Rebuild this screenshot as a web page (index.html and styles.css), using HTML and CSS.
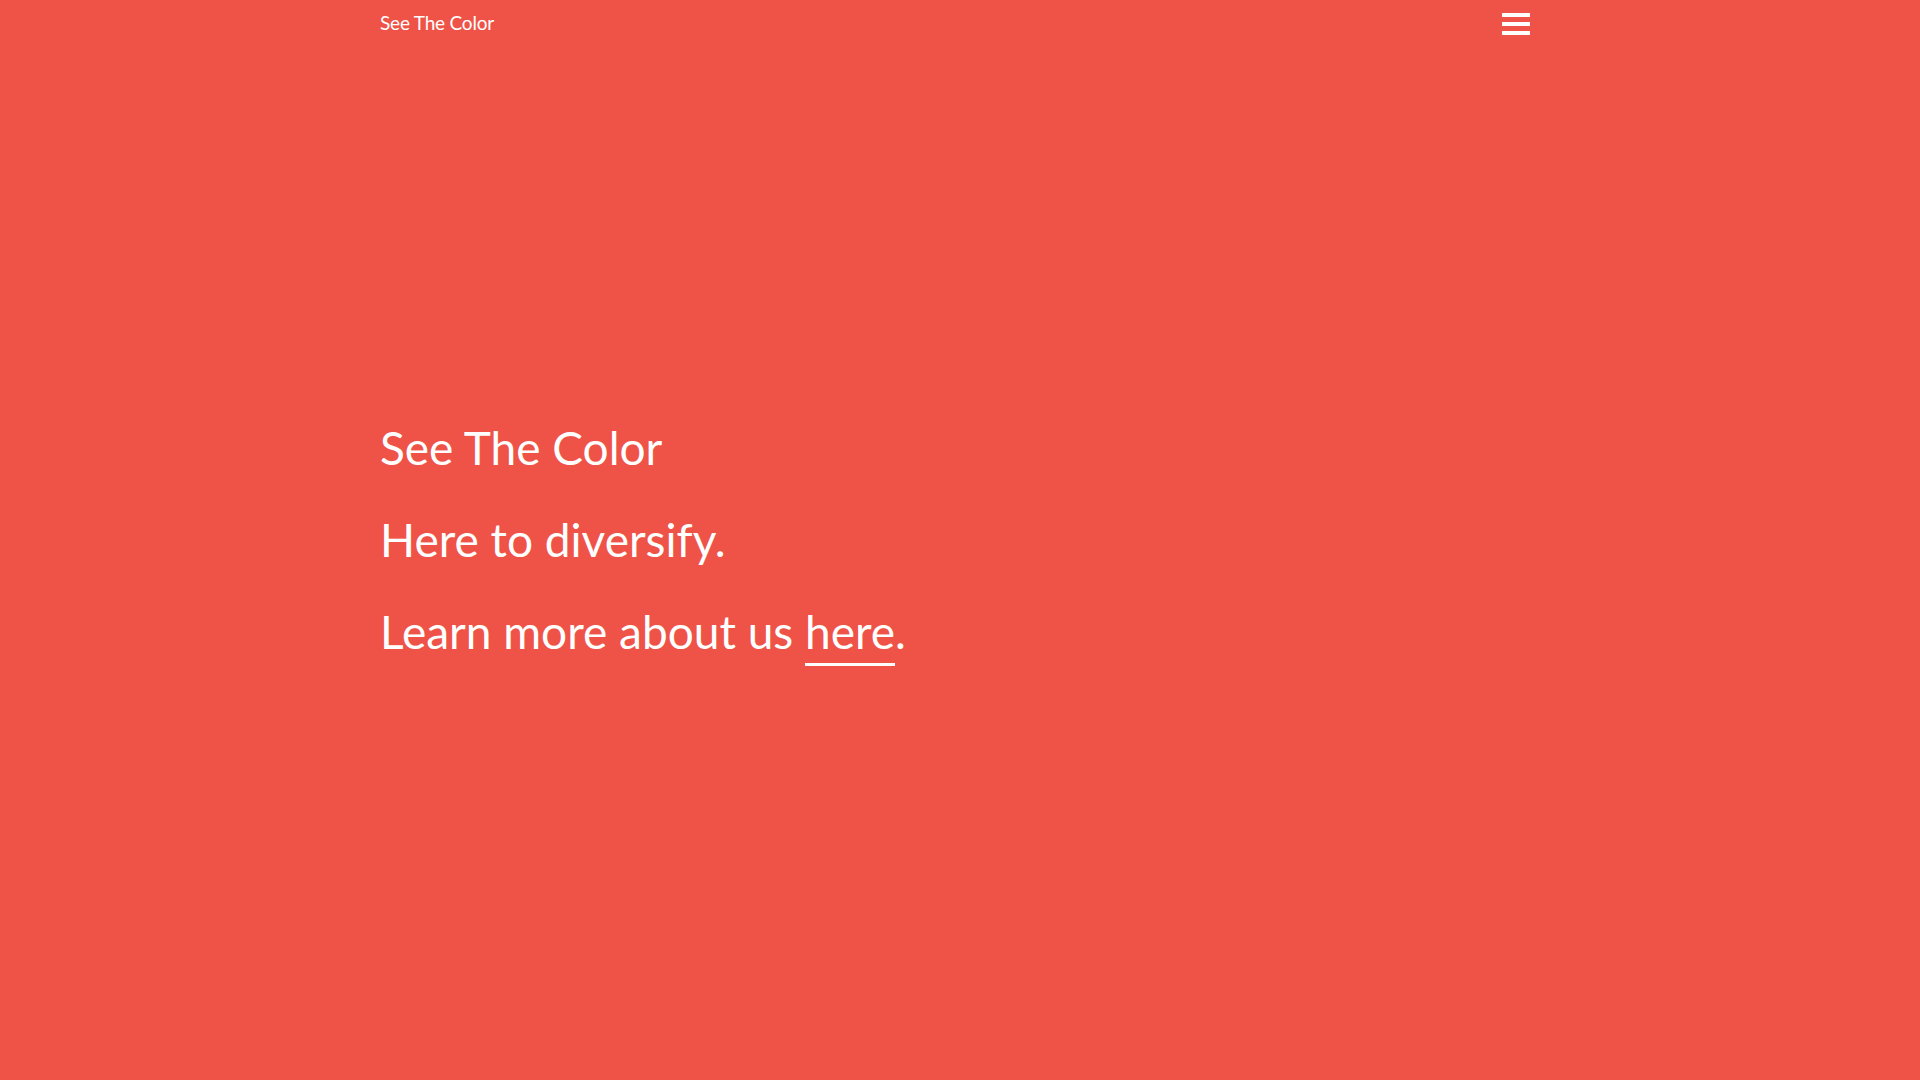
FILE: index.html
```html
<!DOCTYPE html>
<html lang="en">
<head>
<meta charset="utf-8">
<title>See The Color</title>
<link rel="stylesheet" href="styles.css">
</head>
<body>
<header class="topbar">
  <div class="container topbar-inner">
    <a class="brand" href="#">See The Color</a>
    <button class="menu-toggle" aria-label="Menu">
      <span class="bar"></span>
      <span class="bar"></span>
      <span class="bar"></span>
    </button>
  </div>
</header>
<main class="hero">
  <div class="container">
    <p class="hero-line">See The Color</p>
    <p class="hero-line">Here to diversify.</p>
    <p class="hero-line">Learn more about us <a class="hero-link" href="#">here</a>.</p>
  </div>
</main>
</body>
</html>
```
FILE: styles.css
```css
html, body {
  margin: 0;
  padding: 0;
}
body {
  background: #ef5348;
  color: #ffffff;
  font-family: "Lato", "Open Sans", sans-serif;
  height: 100vh;
  display: flex;
  flex-direction: column;
}
.container {
  width: 1160px;
  margin: 0 auto;
}
.topbar-inner {
  display: flex;
  justify-content: space-between;
  align-items: flex-start;
  height: 46px;
}
.brand {
  color: #fff;
  text-decoration: none;
  font-size: 19px;
  letter-spacing: -0.2px;
  line-height: 20px;
  padding-top: 13px;
}
.menu-toggle {
  background: none;
  border: 0;
  padding: 0;
  margin: 13px 10px 0 0;
  width: 28px;
  display: flex;
  flex-direction: column;
  gap: 5px;
  cursor: pointer;
}
.bar {
  display: block;
  width: 28px;
  height: 4px;
  background: #fff;
}
.hero {
  flex: 1;
  display: flex;
  align-items: center;
  padding-bottom: 46px;
}
.hero-line {
  margin: 0;
  font-size: 46px;
  line-height: 92px;
}
.hero-link {
  color: #fff;
  text-decoration: none;
  border-bottom: 3px solid #fff;
  padding-bottom: 4px;
}
```
